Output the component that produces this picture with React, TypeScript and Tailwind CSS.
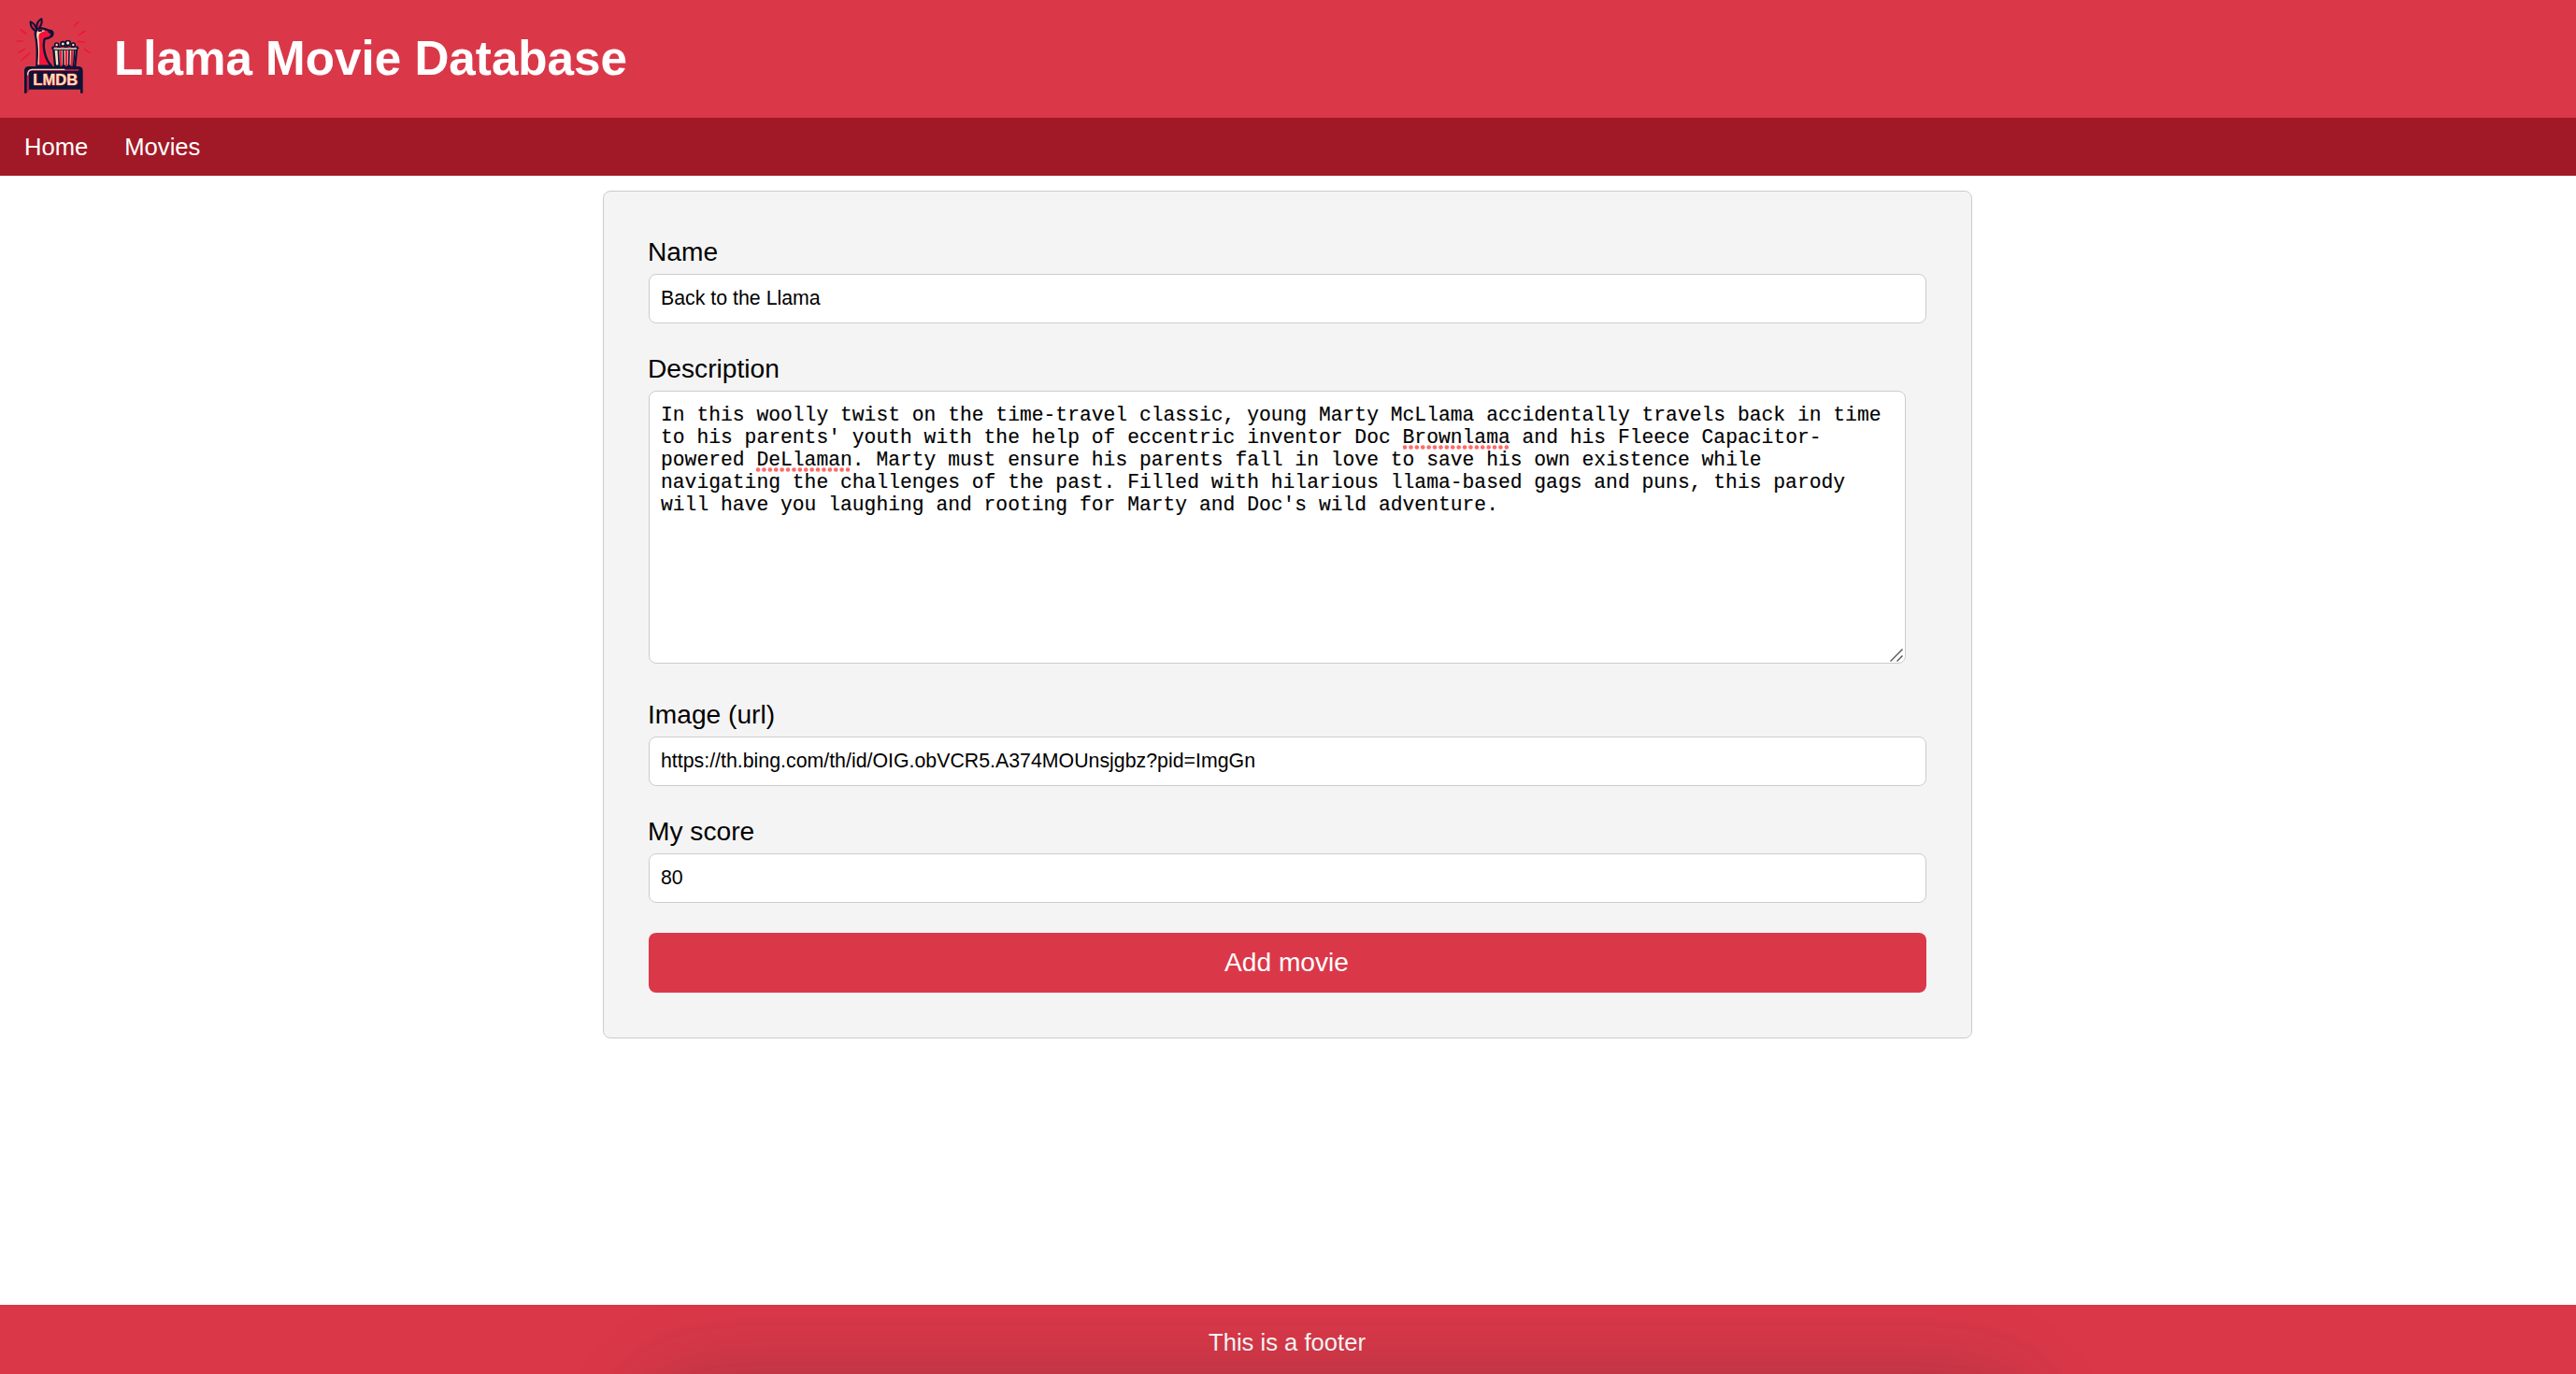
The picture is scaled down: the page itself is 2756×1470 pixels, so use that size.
import type { ReactNode } from "react";

function LlamaLogo() {
  return (
    <svg
      viewBox="40 45 260 260"
      className="mt-[15px] ml-[13.3px] size-[86.67px] shrink-0 self-start"
      fill="none"
      strokeLinecap="round"
      strokeLinejoin="round"
    >
      {/* rays */}
      <path
        d="M67 95l17 13M56 132h17M61 169l20-12M70 194l26-23M239 84l13-14M253 113l21-13M252 133l20 2M272 158l17 12"
        stroke="#f2143c"
        strokeWidth="5"
      />
      {/* llama */}
      <path d="M119 212C121 180 121 150 117 124C112 108 113 94 126 91C140 88 150 96 160 98C170 98 173 106 169 114C165 121 153 122 144 126C137 150 145 190 166 212Z" fill="#f2143c" stroke="#0b1437" strokeWidth="7" />
      <path d="M122 208C125 175 125 150 120 122C117 108 119 97 129 96C134 95 141 97 146 100C134 102 126 106 125 118C129 148 127 180 126 208Z" fill="#f5e3b8" />
      <path d="M114 99C104 92 98 82 99 70C108 73 115 82 117 92M119 90C118 76 125 65 134 60C137 70 134 80 128 88" fill="#ea1c42" stroke="#0b1437" strokeWidth="6" />
      <path d="M126 99l8-1" stroke="#0b1437" strokeWidth="6" />
      <path d="M160 102C168 102 170 107 166 113" stroke="#0b1437" strokeWidth="9" />
      {/* popcorn */}
      <path d="M173 158l5 54h64l5-54z" fill="#f5e3b8" stroke="#0b1437" strokeWidth="7" />
      <path d="M195 163l2 46M214 163v46M233 163l-2 46" stroke="#ea1c42" strokeWidth="8" />
      <path d="M188 163l3 48M204 163l1 48M223 163l-1 48M240 163l-3 48" stroke="#0b1437" strokeWidth="5" />
      <path d="M173 154h74" stroke="#0b1437" strokeWidth="13" />
      <path d="M175 156h71" stroke="#f5e3b8" strokeWidth="4" />
      <g fill="#f5e3b8" stroke="#0b1437" strokeWidth="5">
        <circle cx="183" cy="144" r="6" />
        <circle cx="236" cy="144" r="6" />
        <circle cx="203" cy="141" r="7" />
        <circle cx="219" cy="138" r="7.5" />
      </g>
      <path d="M176 152h68" stroke="#f2143c" strokeWidth="3" strokeDasharray="8 14" />
      {/* stand */}
      <path d="M83 296V228q0-11 11-11h158q11 0 11 11v68" stroke="#0b1437" strokeWidth="8" />
      <path d="M87 220h172v67H96l-9 9z" fill="#0b1437" />
      <path d="M91 292V236q0-11 11-11h150" stroke="#ea1c42" strokeWidth="5" />
      <path d="M90 240q0-16 14-17h104" stroke="#f5e3b8" strokeWidth="3.5" />
      <text
        x="107"
        y="274"
        textLength="144"
        lengthAdjust="spacingAndGlyphs"
        fontFamily="'Liberation Sans', sans-serif"
        fontWeight="700"
        fontSize="47"
        fill="#f5e3b8"
        stroke="#ea1c42"
        strokeWidth="3"
        paintOrder="stroke"
      >
        LMDB
      </text>
    </svg>
  );
}

function Field({ label, children }: { label: string; children: ReactNode }) {
  return (
    <label className="flex flex-col items-start">
      <span className="mb-[7px] -ml-px pt-px text-[28.16px] leading-[32px]">{label}</span>
      {children}
    </label>
  );
}

function TextInput({ value }: { value: string }) {
  return (
    <input
      defaultValue={value}
      className="h-[53px] w-full rounded-[8px] border border-[#ccc] bg-white px-[12px] text-[21.333px] outline-none"
    />
  );
}

function Misspelled({ children }: { children: string }) {
  return (
    <span className="relative">
      {children}
      <svg className="absolute bottom-[-1px] left-0 h-[5px] w-full">
        <line x1="2" y1="2.5" x2="100%" y2="2.5" stroke="#ff6b68" strokeWidth="4.6" strokeLinecap="round" strokeDasharray="0.1 6.3" />
      </svg>
    </span>
  );
}

export default function App() {
  return (
    <div className="flex h-[1470px] w-full flex-col overflow-hidden bg-white font-['Liberation_Sans',Arial,sans-serif] text-black">
      <header className="flex h-[126px] shrink-0 items-center bg-[#da3849]">
        <LlamaLogo />
        <h1 className="ml-[22px] text-[51.2px] leading-none font-bold text-white">Llama Movie Database</h1>
      </header>
      <nav className="flex h-[62px] shrink-0 items-center gap-[39px] bg-[#a11927] pl-[26px] text-[25.6px] text-white">
        <a>Home</a>
        <a>Movies</a>
      </nav>

      <main className="flex flex-1 justify-center pt-[16px]">
        <form className="mr-px flex h-[907px] w-[1465px] flex-col rounded-[8px] border border-[#ccc] bg-[#f4f4f4] px-[48px] pt-[48px]">
          <div className="flex flex-col gap-[32px]">
            <Field label="Name">
              <TextInput value="Back to the Llama" />
            </Field>
            <Field label="Description">
              <div className="relative mb-[6px] h-[292px] w-[1345px] rounded-[8px] border border-[#ccc] bg-white px-[12px] pt-[13px] font-['Liberation_Mono','Courier_New',monospace] text-[21.333px] leading-[24px] whitespace-pre [-webkit-text-stroke:0.15px_black]">
                <p>In this woolly twist on the time-travel classic, young Marty McLlama accidentally travels back in time</p>
                <p>to his parents' youth with the help of eccentric inventor Doc <Misspelled>Brownlama</Misspelled> and his Fleece Capacitor-</p>
                <p>powered <Misspelled>DeLlaman</Misspelled>. Marty must ensure his parents fall in love to save his own existence while</p>
                <p>navigating the challenges of the past. Filled with hilarious llama-based gags and puns, this parody</p>
                <p>will have you laughing and rooting for Marty and Doc's wild adventure.</p>
                <svg viewBox="0 0 14 14" className="absolute right-[2px] bottom-[1px] size-[14px]" stroke="#555" strokeWidth="1.4">
                  <path d="M0.5 13.5L13.5 0.5M7.5 13.5L13.5 7.5" />
                </svg>
              </div>
            </Field>
            <Field label="Image (url)">
              <TextInput value="https://th.bing.com/th/id/OIG.obVCR5.A374MOUnsjgbz?pid=ImgGn" />
            </Field>
            <Field label="My score">
              <TextInput value="80" />
            </Field>
          </div>
          <button type="button" className="mt-[32px] h-[64px] w-full rounded-[8px] bg-[#da3849] pr-[2px] text-[28.16px] text-white">
            Add movie
          </button>
        </form>
      </main>

      <footer className="relative flex h-[74px] shrink-0 justify-center overflow-hidden bg-[#da3849] pt-[21px] text-[25.6px] text-white">
        <span className="mr-[2px]">This is a footer</span>
        <div className="absolute top-[92px] left-[700px] h-[200px] w-[1460px] rounded-[50px] shadow-[0_0_90px_8px_rgba(30,40,40,0.3)]" />
      </footer>
    </div>
  );
}
